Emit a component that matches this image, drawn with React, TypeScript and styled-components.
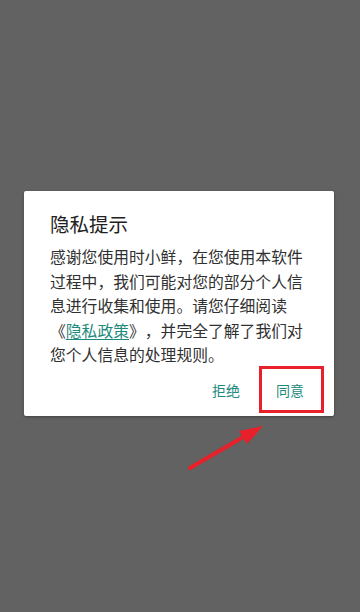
import React from "react";
import styled, { createGlobalStyle } from "styled-components";

const GlobalStyle = createGlobalStyle`
  html, body { margin: 0; padding: 0; background: #626262; }
  body { font-family: "Noto Sans CJK SC", "Noto Sans", Roboto, sans-serif; }
`;

const Screen = styled.div`
  position: relative;
  width: 360px;
  height: 612px;
  background: #626262;
  display: flex;
  flex-direction: column;
  align-items: flex-start;
  padding-top: 191px;
  padding-left: 24px;
  box-sizing: border-box;
  overflow: hidden;
`;

const Card = styled.div`
  width: 310px;
  height: 225px;
  box-sizing: border-box;
  background: #ffffff;
  border-radius: 2px;
  box-shadow: 0 1px 3px rgba(0, 0, 0, 0.35);
  padding: 19px 12px 0 26px;
  display: flex;
  flex-direction: column;
`;

const Title = styled.h2`
  margin: 0;
  font-size: 19.5px;
  line-height: 28px;
  font-weight: 400;
  color: #212121;
`;

const Body = styled.p`
  margin: 7px 0 0;
  font-size: 15.8px;
  line-height: 24.5px;
  color: #303030;
  white-space: nowrap;
  text-spacing-trim: space-all;
`;

const Link = styled.span`
  color: #1e8a7d;
  text-decoration: underline;
  text-underline-offset: 2px;
`;

const Actions = styled.div`
  display: flex;
  justify-content: flex-end;
  height: 44px;
  margin-top: auto;
  margin-bottom: 5px;
`;

const ActionButton = styled.button`
  position: relative;
  width: 64px;
  height: 44px;
  border: none;
  background: transparent;
  padding: 0;
  font-family: inherit;
  font-size: 14px;
  color: #1e8a7d;
  cursor: pointer;
`;

const HighlightBox = styled.span`
  position: absolute;
  top: -2px;
  left: 1px;
  right: -2px;
  bottom: -1px;
  border: 3px solid #e8202a;
  pointer-events: none;
`;

const ArrowSvg = styled.svg`
  position: absolute;
  left: 0;
  top: 0;
  pointer-events: none;
`;

export default function App() {
  return (
    <>
      <GlobalStyle />
      <Screen>
        <Card>
          <Title>隐私提示</Title>
          <Body>
            感谢您使用时小鲜，在您使用本软件
            <br />
            过程中，我们可能对您的部分个人信
            <br />
            息进行收集和使用。请您仔细阅读
            <br />
            《<Link>隐私政策</Link>》，并完全了解了我们对
            <br />
            您个人信息的处理规则。
          </Body>
          <Actions>
            <ActionButton>拒绝</ActionButton>
            <ActionButton>
              同意
              <HighlightBox />
            </ActionButton>
          </Actions>
        </Card>
        <ArrowSvg width="360" height="612" viewBox="0 0 360 612">
          <line
            x1="190"
            y1="468"
            x2="245"
            y2="436"
            stroke="#e8202a"
            strokeWidth="4"
            strokeLinecap="round"
          />
          <polygon points="263,426 239,431 247,444" fill="#e8202a" />
        </ArrowSvg>
      </Screen>
    </>
  );
}
